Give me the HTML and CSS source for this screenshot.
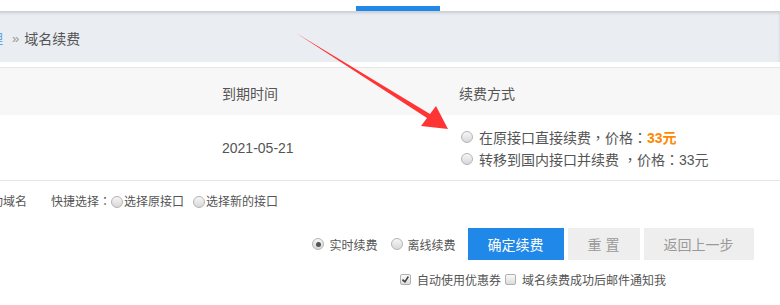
FILE: index.html
```
<!DOCTYPE html>
<html>
  <head>
    <meta charset="utf-8">
    <link rel="stylesheet" href="styles.css">
  </head>
  <body>
    <div class="topbar">
      <span class="tab-active"></span>
    </div>
    <div class="crumb">
      <a class="crumb-link">域名管理</a>
      <span class="crumb-sep">»</span>
      <span class="crumb-current">域名续费</span>
    </div>
    <div class="renew-table">
      <div class="renew-head">
        <div class="cell cell-name">域名</div>
        <div class="cell">到期时间</div>
        <div class="cell">续费方式</div>
      </div>
      <div class="renew-row">
        <div class="cell cell-name">example.com</div>
        <div class="cell">2021-05-21</div>
        <div class="cell cell-options">
          <label class="radio-label">
            <input type="radio" name="renew-way" value="origin" />
            <span>在原接口直接续费<span class="punct">，</span>价格<span class="punct">：</span><b class="price">33元</b></span>
          </label>
          <label class="radio-label">
            <input type="radio" name="renew-way" value="transfer" />
            <span>转移到国内接口并续费 <span class="punct">，</span>价格<span class="punct">：</span>33元</span>
          </label>
        </div>
      </div>
    </div>
    <div class="quick-select">
      <span class="quick-all">全选活动域名</span>
      <span class="quick-title">快捷选择<span class="punct">：</span></span>
      <label class="quick-label"><input type="radio" name="quick" value="old" />选择原接口</label>
      <label class="quick-label"><input type="radio" name="quick" value="new" />选择新的接口</label>
    </div>
    <div class="actions">
      <div class="action-row">
        <label class="mode-label"><input type="radio" name="mode" value="realtime" checked />实时续费</label>
        <label class="mode-label"><input type="radio" name="mode" value="offline" />离线续费</label>
        <button type="button" class="btn btn-primary">确定续费</button>
        <button type="button" class="btn btn-gray btn-reset">重 置</button>
        <button type="button" class="btn btn-gray btn-back">返回上一步</button>
      </div>
      <div class="option-row">
        <label class="check-label"><input type="checkbox" value="coupon" checked />自动使用优惠券</label>
        <label class="check-label"><input type="checkbox" value="mail" />域名续费成功后邮件通知我</label>
      </div>
    </div>
    <svg class="annotation" width="780" height="305" viewBox="0 0 780 305">
      <polygon points="296,33 430,114 436,106 448,129 421,126 427,118" fill="#ff3535" />
    </svg>
  </body>
</html>
```

FILE: styles.css
```
:root {
  --text-color: #555;
  --accent-color: #1f88e8;
  --line-color: #e6e6e6;
  --crumb-bg: #eaedf2;
  --head-bg: #f7f7f7;
}
* { box-sizing: border-box; }
body {
  margin: 0;
  width: 780px;
  height: 305px;
  overflow: hidden;
  position: relative;
  background: #fff;
  color: var(--text-color);
  font-family: "Liberation Sans", "Noto Sans CJK SC", sans-serif;
  font-size: 14px;
}
/* centred full-width punctuation, like the original YaHei rendering */
.punct { font-family: "Noto Sans CJK TC", sans-serif; }

.topbar {
  height: 11px;
  display: flex;
  align-items: flex-end;
  padding-left: 356px;
}
.tab-active {
  width: 84px;
  height: 5px;
  background: var(--accent-color);
}

.crumb {
  height: 51px;
  background: var(--crumb-bg);
  box-shadow: inset 0 2px 3px rgba(0, 0, 0, 0.14);
  display: flex;
  align-items: center;
  padding-top: 3px;
  margin-left: -53px;
}
.crumb-link { color: #5aa7e0; }
.crumb-sep {
  color: #999;
  margin: 0 5px 0 9px;
  font-size: 13px;
}
.crumb-current { color: #555; }

.renew-table {
  margin-top: 5px;
  border-top: 1px solid var(--line-color);
  border-bottom: 1px solid var(--line-color);
}
.renew-head, .renew-row {
  display: grid;
  grid-template-columns: 222px 237px 1fr;
  align-items: center;
}
.renew-head {
  height: 47px;
  background: var(--head-bg);
  padding-top: 2px;
}
.renew-row {
  height: 65px;
  padding-top: 1px;
}
.cell-name { visibility: hidden; }
.cell-options {
  display: flex;
  flex-direction: column;
  padding-left: 2px;
}

.radio-label {
  display: flex;
  align-items: center;
  gap: 6px;
  height: 22px;
}
.price {
  color: #ff8800;
  font-weight: bold;
}

input[type="radio"] {
  appearance: none;
  -webkit-appearance: none;
  margin: 0;
  width: 12px;
  height: 12px;
  border: 1px solid #b4b4b4;
  border-radius: 50%;
  background: linear-gradient(#f6f6f6, #d8d8d8);
  display: grid;
  place-content: center;
  flex-shrink: 0;
}
input[type="radio"]:checked::before {
  content: "";
  width: 5px;
  height: 5px;
  border-radius: 50%;
  background: #555;
}
input[type="checkbox"] {
  appearance: none;
  -webkit-appearance: none;
  margin: 0;
  width: 11px;
  height: 11px;
  border: 1px solid #b0b0b0;
  border-radius: 2px;
  background: linear-gradient(#fafafa, #dcdcdc);
  display: grid;
  place-content: center;
  flex-shrink: 0;
}
input[type="checkbox"]:checked::before {
  content: "";
  width: 7px;
  height: 7px;
  background: #444;
  clip-path: polygon(14% 44%, 0 65%, 45% 100%, 100% 16%, 82% 0%, 42% 64%);
}

.quick-select {
  display: flex;
  align-items: center;
  height: 38px;
  font-size: 12px;
  margin-left: -45px;
}
.quick-all { margin-right: 24px; }
.quick-label {
  display: flex;
  align-items: center;
  gap: 1px;
  margin-right: 9px;
}
.quick-label input { margin-top: 3px; }

.actions {
  display: flex;
  flex-direction: column;
  align-items: center;
  padding-left: 286px;
  padding-top: 9px;
}
.action-row {
  display: flex;
  align-items: center;
  font-size: 12px;
}
.mode-label {
  display: flex;
  align-items: center;
  gap: 5px;
  margin-right: 13px;
}
.mode-label + .mode-label { margin-right: 12px; }
.btn {
  border: none;
  height: 32px;
  font-family: inherit;
  font-size: 14px;
  cursor: pointer;
}
.btn-primary {
  width: 96px;
  background: var(--accent-color);
  color: #fff;
}
.btn-gray {
  background: #eeeeee;
  color: #999;
  margin-left: 4px;
}
.btn-reset { width: 72px; }
.btn-back { width: 110px; }

.option-row {
  display: flex;
  align-items: center;
  gap: 4px;
  margin-top: 11px;
  font-size: 12px;
}
.check-label {
  display: flex;
  align-items: center;
  gap: 6px;
}

.annotation {
  position: absolute;
  left: 0;
  top: 0;
  pointer-events: none;
}
```
